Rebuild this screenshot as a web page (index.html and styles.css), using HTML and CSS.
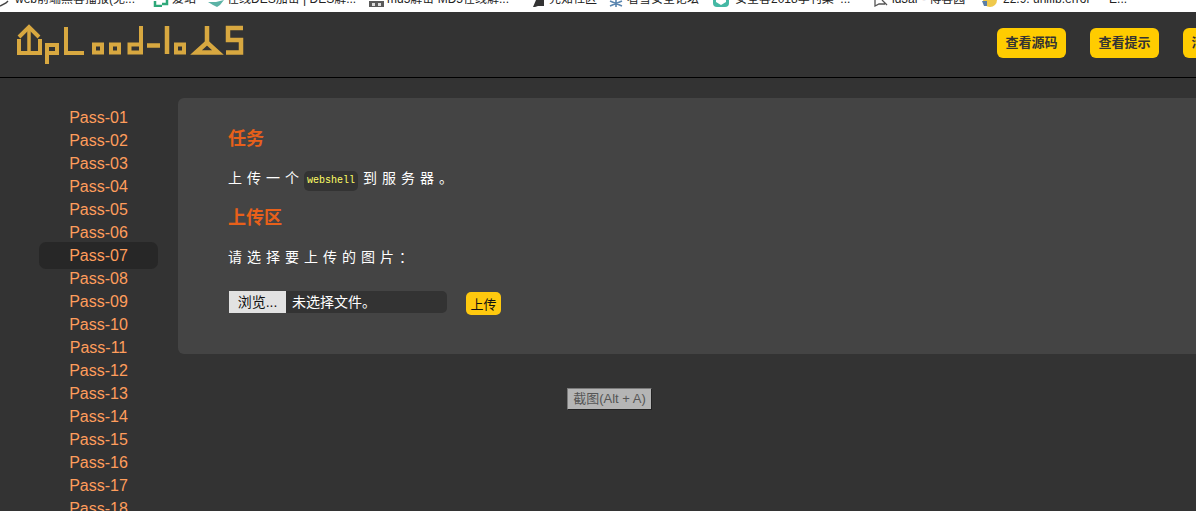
FILE: index.html
```html
<!DOCTYPE html>
<html lang="en">
<head>
  <meta charset="UTF-8" />
  <title>upload-labs</title>
  <link rel="stylesheet" href="styles.css">
</head>
<body>
  <!-- Browser bookmarks, only the lower edge is in the shot -->
  <div class="bookmarks">
    <div class="bookmark">
      <svg class="favicon fav-first" viewBox="0 0 12 16"><path d="M0 15 L6 12 L8 10" fill="none" stroke="#444" stroke-width="1.500"/></svg>
      web前端黑客播报(免...
    </div>
    <div class="bookmark">
      <svg class="favicon" viewBox="0 0 16 16"><path d="M2 10 V15 H9 M14 8 V13 H9" fill="none" stroke="#2ea879" stroke-width="2.500"/></svg>
      爱站
    </div>
    <div class="bookmark">
      <svg class="favicon" viewBox="0 0 16 16"><path d="M0 11 L8 11 L16 9 L12 14 L9 16 L5 14 Z" fill="#5cb3a6"/></svg>
      在线DES加密 | DES解...
    </div>
    <div class="bookmark">
      <svg class="favicon" viewBox="0 0 16 16"><rect x="1" y="10" width="15" height="6" fill="#5a5a5a"/><rect x="4" y="12" width="3" height="3" fill="#ddd"/><rect x="10" y="12" width="3" height="3" fill="#ddd"/></svg>
      md5解密 MD5在线解...
    </div>
    <div class="bookmark">
      <svg class="favicon" viewBox="0 0 16 16"><path d="M3 16 L6 9 H14 V15 H8 L5 16 Z" fill="#333"/></svg>
      先知社区
    </div>
    <div class="bookmark">
      <svg class="favicon" viewBox="0 0 16 16"><path d="M8 9 V16 M2 10 L14 15 M14 10 L2 15" fill="none" stroke="#5a86b0" stroke-width="1.600"/></svg>
      看雪安全论坛
    </div>
    <div class="bookmark">
      <svg class="favicon fav-wide" viewBox="0 0 20 16"><rect x="1" y="2" width="16" height="14" rx="4" fill="#45b8a4"/><path d="M4 9 H14 V11 L9 14 L4 11 Z" fill="#fff"/></svg>
      安全客2018季刊集 &nbsp;...
    </div>
    <div class="bookmark">
      <svg class="favicon" viewBox="0 0 16 16"><path d="M2 9 V15 L6 13 H12 M9 9 L14 14" fill="none" stroke="#555" stroke-width="1.300"/></svg>
      ld3ar - 博客园
    </div>
    <div class="bookmark">
      <svg class="favicon fav-wide" viewBox="0 0 18 16"><circle cx="9" cy="9" r="7" fill="#efc94c"/><path d="M1 10 H6 V15 H3 Z" fill="#5a7fa8"/></svg>
      22.9. unifib.error — E...
    </div>
  </div>

  <div class="page">
    <header class="topbar">
      <svg class="logo" width="232" height="44" viewBox="0 0 232 44" role="img" aria-label="upload-labs">
        <g transform="translate(-14 -23)" fill="none" stroke="#d8a840" stroke-width="4">
          <path d="M19 37 L29 27 L39 37"/>
          <path d="M29 27 V54" stroke-width="3.500"/>
          <path d="M19 39 V53 H40 V39"/>
          <path d="M47 64 V45 H57 V53 H47"/>
          <path d="M66 27 V53 H84"/>
          <rect x="94" y="44.500" width="8" height="8"/>
          <rect x="111" y="44.500" width="8" height="8"/>
          <path d="M141 26 V52.500 H129.500 V44.500 H141"/>
          <path d="M147 45.500 H160" stroke-width="4.500"/>
          <path d="M167 26 V54" stroke-width="4.500"/>
          <rect x="176" y="44.500" width="8" height="8"/>
          <path d="M207 26 V42" stroke-width="4.500"/>
          <path d="M196 52.500 L207 42.500 L218 52.500 Z" stroke-width="4.500"/>
          <path d="M243 28 H228 V40 H241 V52.500 H226" stroke-width="4.500"/>
        </g>
      </svg>
      <nav class="actions">
        <a class="action-btn">查看源码</a>
        <a class="action-btn">查看提示</a>
        <a class="action-btn">清空上传</a>
      </nav>
    </header>

    <div class="main">
      <ul class="menu">
        <li>Pass-01</li>
        <li>Pass-02</li>
        <li>Pass-03</li>
        <li>Pass-04</li>
        <li>Pass-05</li>
        <li>Pass-06</li>
        <li class="active">Pass-07</li>
        <li>Pass-08</li>
        <li>Pass-09</li>
        <li>Pass-10</li>
        <li>Pass-11</li>
        <li>Pass-12</li>
        <li>Pass-13</li>
        <li>Pass-14</li>
        <li>Pass-15</li>
        <li>Pass-16</li>
        <li>Pass-17</li>
        <li>Pass-18</li>
        <li>Pass-19</li>
      </ul>

      <section class="panel">
        <h3>任务</h3>
        <p>上传一个<code>webshell</code>到服务器。</p>
        <h3>上传区</h3>
        <p>请选择要上传的图片：</p>
        <form class="upload-form">
          <div class="file-field">
            <span class="file-btn">浏览...</span>
            <span class="file-name">未选择文件。</span>
          </div>
          <button class="upload-btn" type="button">上传</button>
        </form>
      </section>
    </div>
  </div>

  <!-- Screenshot tool tooltip floating over the page -->
  <div class="shot-tip">截图(Alt + A)</div>
</body>
</html>
```
FILE: styles.css
```css
/* Global resets */
* {
  margin: 0;
  padding: 0;
  box-sizing: border-box;
}
html, body {
  height: 511px;
  overflow: hidden;
}
body {
  background-color: #333;
  font-family: 'Liberation Sans', 'Noto Sans CJK SC', sans-serif;
  position: relative;
}

/* Bookmarks bar, cut off at the top */
.bookmarks {
  height: 12px;
  overflow: hidden;
  background-color: #fff;
  display: grid;
  grid-template-columns: 153px 55px 160px 162px 78px 104px 161px 107px 216px;
}
.bookmark {
  display: flex;
  align-items: center;
  gap: 3px;
  margin-top: -9px;
  height: 16px;
  line-height: 16px;
  font-size: 12px;
  color: #222;
  white-space: nowrap;
}
.favicon {
  width: 16px;
  height: 16px;
  flex: none;
}
.fav-first { width: 12px; }
.fav-wide { width: 20px; }

/* The page is wider than the window */
.page {
  width: 1300px;
}

.topbar {
  height: 66px;
  border-bottom: 1px solid #000;
  display: flex;
  align-items: center;
  justify-content: space-between;
  padding: 0 48px 0 14px;
}
.logo {
  display: block;
  margin-top: 1px;
}
.actions {
  display: flex;
  gap: 24px;
  margin-top: -3px;
}
.action-btn {
  display: block;
  width: 69px;
  height: 30px;
  line-height: 30px;
  text-align: center;
  background-color: #ffcc00;
  color: #333;
  border-radius: 6px;
  font-size: 13px;
  font-weight: bold;
}

.main {
  display: flex;
  align-items: flex-start;
}

/* Left menu */
.menu {
  list-style: none;
  width: 119px;
  margin: 28px 20px 0 39px;
  flex: none;
}
.menu li {
  height: 23px;
  line-height: 23px;
  text-align: center;
  font-size: 16px;
  color: #ff9d5c;
}
.menu li.active {
  height: 27px;
  line-height: 23px;
  margin: -2px 0;
  padding-top: 2px;
  background-color: #272727;
  border-radius: 7px;
}

/* Content panel */
.panel {
  flex: 1;
  margin-top: 20px;
  padding: 29px 50px 39px;
  background-color: #444;
  border-radius: 6px;
}
.panel h3 {
  font-size: 18px;
  line-height: 24px;
  font-weight: bold;
  color: #e8601a;
  margin-bottom: 15px;
}
.panel p {
  font-size: 14px;
  line-height: 24px;
  letter-spacing: 5px;
  color: #fff;
  margin-bottom: 15px;
}
.panel code {
  display: inline-block;
  font-family: 'Liberation Mono', monospace;
  font-size: 10px;
  line-height: 20px;
  letter-spacing: 0;
  padding: 0 3px;
  margin-right: 5px;
  color: #ffff66;
  background-color: #333;
  border-radius: 5px;
}

.upload-form {
  display: flex;
  align-items: flex-start;
  gap: 19px;
  margin-top: 22px;
  padding-left: 1px;
}
.file-field {
  width: 218px;
  height: 22px;
  display: flex;
  background-color: #333;
  border-radius: 0 5px 5px 0;
  font-size: 14px;
  line-height: 22px;
  overflow: hidden;
}
.file-btn {
  width: 57px;
  text-align: center;
  background-color: #e2e2e2;
  color: #111;
}
.file-name {
  padding-left: 6px;
  color: #fff;
}
.upload-btn {
  width: 35px;
  height: 23px;
  margin-top: 1px;
  border: none;
  border-radius: 5px;
  background-color: #ffc90e;
  color: #111;
  font-family: inherit;
  font-size: 13px;
}

.shot-tip {
  position: absolute;
  left: 567px;
  top: 388px;
  width: 85px;
  height: 22px;
  line-height: 20px;
  text-align: center;
  font-size: 13px;
  color: #555;
  background-color: #b5b5b5;
  border: 1px solid #7a7a7a;
  border-right-color: #222;
  border-bottom-color: #222;
}
```
